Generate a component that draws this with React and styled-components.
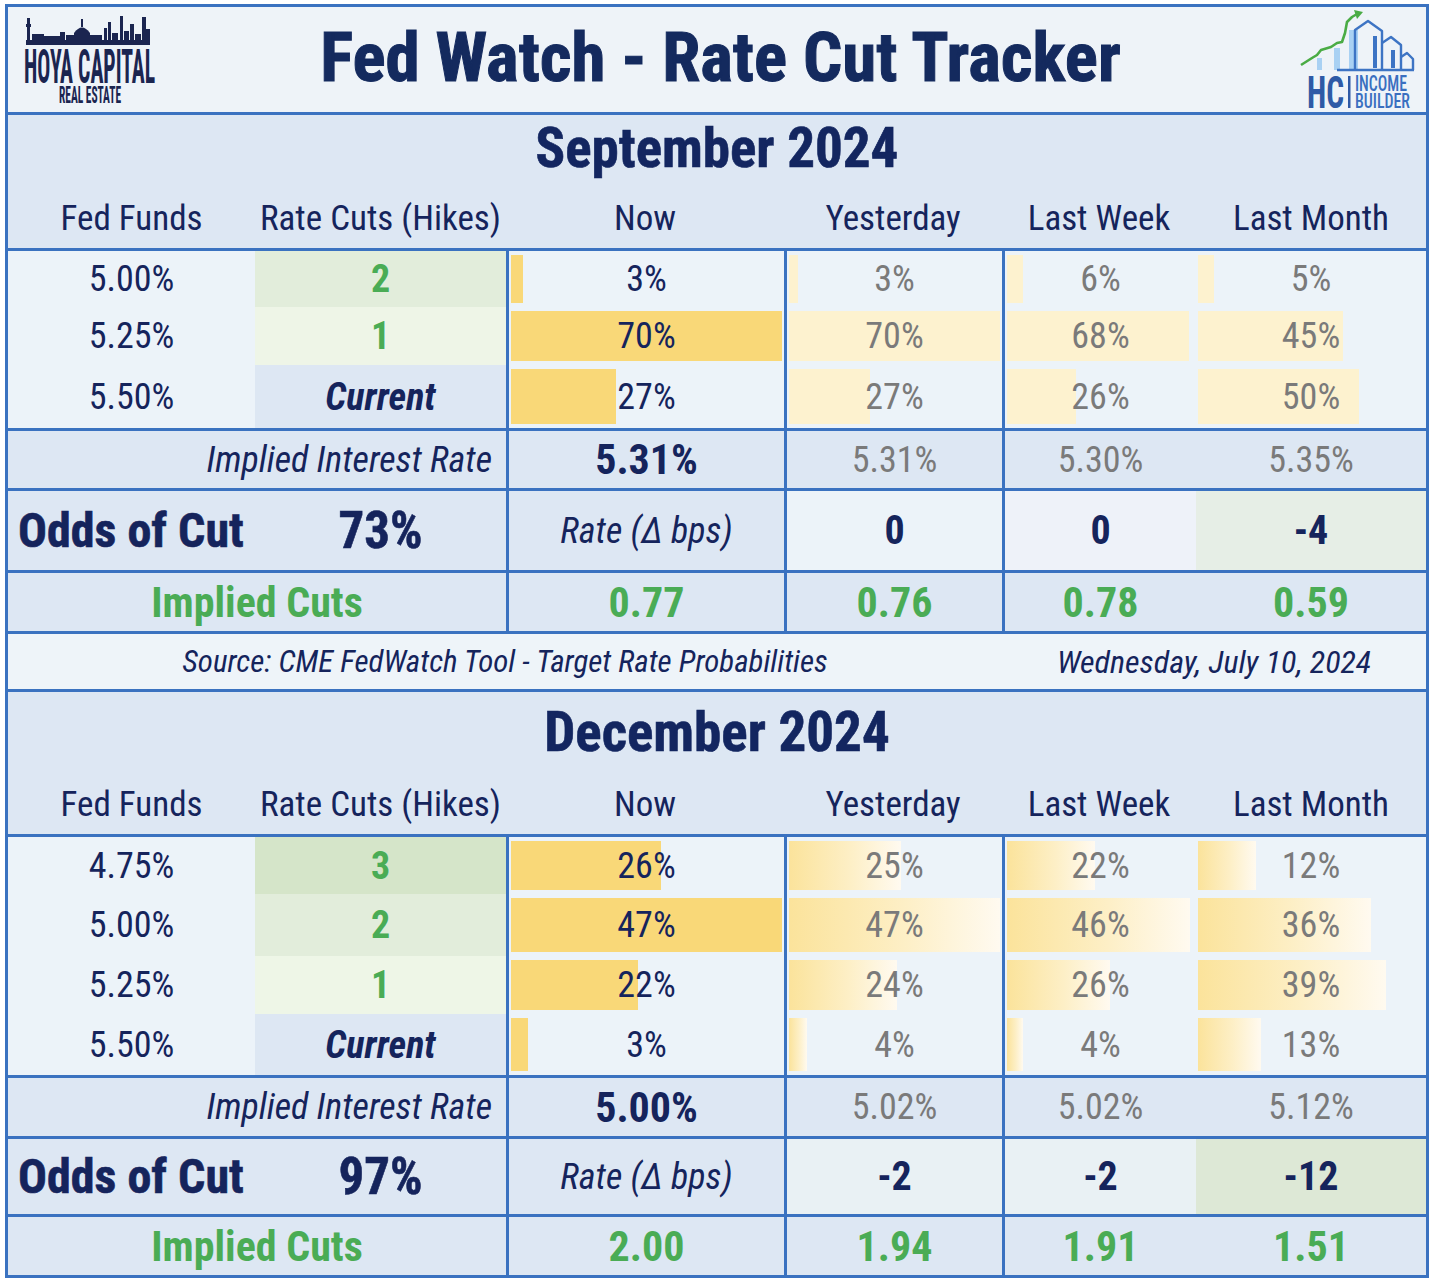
import React from "react";
import styled, { createGlobalStyle } from "styled-components";

const NAVY = "#15245c";
const BLUE = "#3a72c0";
const GREEN = "#4aac55";
const GRAY = "#7a7a7a";
const PALE = "#ecf3f9";
const BAND = "#dde7f3";
const FONT = `"Roboto Condensed", "Noto Sans", sans-serif`;
const COLS = "247px 251px 278px 218px 194px 230px";

const GlobalStyle = createGlobalStyle`
  body {
    margin: 0;
    background: #ffffff;
    font-family: ${FONT};
    font-stretch: condensed;
    color: ${NAVY};
  }
  * { box-sizing: border-box; }
`;

const Page = styled.div`
  padding: 4px 0 6px 5px;
`;

const Frame = styled.div`
  width: 1424px;
  border: 3px solid ${BLUE};
`;

const Header = styled.div`
  display: grid;
  grid-template-columns: 1fr auto 1fr;
  height: 105px;
  background: #eef3f8;
  padding: 0 9px 0 16px;
`;

const LeftLogo = styled.svg`
  justify-self: start;
  margin-top: 7px;
`;

const RightLogo = styled.svg`
  justify-self: end;
  margin-top: 1px;
`;

const Title = styled.h1`
  margin: 0;
  align-self: center;
  font-size: 69px;
  font-weight: 700;
  line-height: 1;
  margin-top: -4px;
  color: #142a5e;
  -webkit-text-stroke: 1px #142a5e;
`;

const Band = styled.div`
  border-top: 3px solid ${BLUE};
  background: ${BAND};
`;

const SectionTitle = styled.div`
  height: ${(p) => p.$h}px;
  display: flex;
  align-items: center;
  justify-content: center;
  font-size: 55px;
  font-weight: 700;
  color: #132660;
  -webkit-text-stroke: 0.6px #132660;
  padding-top: ${(p) => p.$shift}px;
`;

const Row = styled.div`
  display: grid;
  grid-template-columns: ${COLS};
  height: ${(p) => p.$h}px;
  border-top: ${(p) => (p.$plain ? "none" : `3px solid ${BLUE}`)};
`;

const Cell = styled.div`
  grid-column: span ${(p) => p.$span || 1};
  display: flex;
  align-items: center;
  justify-content: center;
  background: ${(p) => p.$bg || BAND};
  border-left: ${(p) => (p.$line ? `3px solid ${BLUE}` : "none")};
  color: ${NAVY};
  font-size: 36px;
  white-space: nowrap;
  min-width: 0;
`;

const HeadCell = styled(Cell)`
  background: transparent;
  font-size: 35px;
  padding-top: 8px;
`;

const RateCell = styled(Cell)`
  background: ${PALE};
`;

const CutCell = styled(Cell)`
  font-weight: 700;
  font-size: 38px;
  color: ${(p) => (p.$current ? NAVY : GREEN)};
  font-style: ${(p) => (p.$current ? "italic" : "normal")};
`;

const BarCell = styled(Cell)`
  display: grid;
  grid-template-columns: minmax(0, 1fr);
  grid-template-rows: minmax(0, 1fr);
  padding: 4px 2px;
  background: ${PALE};
`;

const Bar = styled.div`
  grid-area: 1 / 1;
  justify-self: start;
  height: 100%;
  background: ${(p) => p.$fill};
`;

const BarValue = styled.span`
  grid-area: 1 / 1;
  place-self: center;
  color: ${(p) => (p.$now ? NAVY : GRAY)};
  z-index: 1;
`;

const LabelCell = styled(Cell)`
  justify-content: flex-end;
  padding-right: 14px;
  font-style: italic;
`;

const ImpliedValue = styled(Cell)`
  font-weight: ${(p) => (p.$now ? 700 : 400)};
  font-size: ${(p) => (p.$now ? 42 : 36)}px;
  color: ${(p) => (p.$now ? NAVY : GRAY)};
`;

const OddsLabel = styled(Cell)`
  justify-content: flex-start;
  padding-left: 10px;
  font-size: 48px;
  font-weight: 700;
  -webkit-text-stroke: 0.6px ${NAVY};
`;

const OddsValue = styled(Cell)`
  font-size: 51px;
  font-weight: 700;
  -webkit-text-stroke: 0.6px ${NAVY};
`;

const DeltaLabel = styled(Cell)`
  font-style: italic;
`;

const DeltaValue = styled(Cell)`
  font-size: 40px;
  font-weight: 700;
`;

const CutsCell = styled(Cell)`
  font-size: 42px;
  font-weight: 700;
  color: ${GREEN};
`;

const SourceCell = styled(Cell)`
  background: #eef4f9;
  font-style: italic;
  font-size: ${(p) => p.$size}px;
`;

const sections = [
  {
    title: "September 2024",
    titleH: 66,
    shift: 0,
    max: 70,
    gradient: false,
    rows: [
      { rate: "5.00%", cut: "2", cutBg: "#e2eddb", h: 59, vals: [3, 3, 6, 5] },
      { rate: "5.25%", cut: "1", cutBg: "#eef5e7", h: 58, vals: [70, 70, 68, 45] },
      { rate: "5.50%", cut: "Current", h: 63, vals: [27, 27, 26, 50] },
    ],
    implied: ["5.31%", "5.31%", "5.30%", "5.35%"],
    odds: "73%",
    oddsH: 82,
    deltas: [
      { v: "0", bg: PALE },
      { v: "0", bg: "#eef2f9" },
      { v: "-4", bg: "#e6eee6" },
    ],
    cuts: ["0.77", "0.76", "0.78", "0.59"],
    impliedH: 60,
    cutsH: 61,
  },
  {
    title: "December 2024",
    titleH: 75,
    shift: 4,
    max: 47,
    gradient: true,
    rows: [
      { rate: "4.75%", cut: "3", cutBg: "#d5e5c9", h: 60, vals: [26, 25, 22, 12] },
      { rate: "5.00%", cut: "2", cutBg: "#e2eddb", h: 62, vals: [47, 47, 46, 36] },
      { rate: "5.25%", cut: "1", cutBg: "#eef6e7", h: 58, vals: [22, 24, 26, 39] },
      { rate: "5.50%", cut: "Current", h: 61, vals: [3, 4, 4, 13] },
    ],
    implied: ["5.00%", "5.02%", "5.02%", "5.12%"],
    odds: "97%",
    oddsH: 78,
    deltas: [
      { v: "-2", bg: "#e9f1f4" },
      { v: "-2", bg: "#e9f1f4" },
      { v: "-12", bg: "#dde8d6" },
    ],
    cuts: ["2.00", "1.94", "1.91", "1.51"],
    impliedH: 61,
    cutsH: 61,
  },
];

const HEADS = ["Fed Funds", "Rate Cuts (Hikes)", "Now", "Yesterday", "Last Week", "Last Month"];

const barFill = (now, gradient) => {
  if (now) return "#f9d878";
  if (gradient) return "linear-gradient(90deg, #fbe39b 0%, #fdefc6 55%, #fffaf0 100%)";
  return "#fdf2cf";
};

// tall, squeezed logo lettering: small font stretched vertically
const LogoText = ({ x, y, size, sy, width, weight, fill, children }) => (
  <text
    x={x}
    y={y / sy}
    transform={`scale(1 ${sy})`}
    fontSize={size}
    fontWeight={weight}
    fill={fill}
    fontFamily={FONT}
    textLength={width}
    lengthAdjust="spacingAndGlyphs"
  >
    {children}
  </text>
);

const HoyaLogo = () => (
  <LeftLogo width="135" height="92" viewBox="0 0 135 92">
    <g fill="#1b2550">
      <rect x="2" y="26" width="124" height="5" />
      <rect x="3" y="4" width="3" height="22" />
      <rect x="2" y="10" width="5" height="3" />
      <rect x="8" y="20" width="12" height="6" />
      <rect x="20" y="22" width="16" height="4" />
      <rect x="36" y="18" width="5" height="8" />
      <rect x="42" y="21" width="8" height="5" />
      <path d="M50 26 L50 19 Q58 8 66 19 L66 26 Z" />
      <rect x="57" y="5" width="2" height="8" />
      <rect x="66" y="21" width="12" height="5" />
      <rect x="80" y="14" width="3" height="12" />
      <rect x="84" y="8" width="3" height="18" />
      <rect x="88" y="19" width="6" height="7" />
      <rect x="96" y="2" width="3" height="24" />
      <rect x="100" y="17" width="5" height="9" />
      <rect x="106" y="10" width="4" height="16" />
      <rect x="111" y="20" width="6" height="6" />
      <rect x="118" y="3" width="4" height="23" />
      <rect x="122" y="15" width="4" height="11" />
    </g>
    <LogoText x={0} y={69} size={23} sy={2.1} width={131} weight={700} fill="#1b2550">
      HOYA CAPITAL
    </LogoText>
    <LogoText x={35} y={89} size={12} sy={2} width={62} weight={700} fill="#1b2550">
      REAL ESTATE
    </LogoText>
  </LeftLogo>
);

const IncomeLogo = () => (
  <RightLogo width="120" height="104" viewBox="0 0 120 104">
    <g fill="#a9d1f3">
      <rect x="52" y="22" width="9" height="40" />
      <rect x="37" y="40" width="6" height="22" />
      <rect x="20" y="50" width="5" height="12" />
    </g>
    <g fill="none" stroke="#3d74c4" strokeWidth="2.4" strokeLinejoin="round">
      <path d="M58 62 L58 22 L71 13 L85 23 L85 62" />
      <path d="M85 35 L94 29 L104 37 L104 62" />
      <path d="M104 49 L110 45 L116 51 L116 62" />
      <path d="M40 62 L117 62" />
    </g>
    <g fill="#3d74c4">
      <rect x="76" y="28" width="4" height="32" />
      <rect x="94" y="42" width="4" height="18" />
    </g>
    <polyline
      points="4,57 15,50 20,47 24,42 34,39 40,35 45,34 48,25 50,14 55,9 60,6"
      fill="none"
      stroke="#4aac45"
      strokeWidth="2.6"
      strokeLinejoin="round"
    />
    <path d="M57 2 L66 4 L60 11 Z" fill="#4aac45" />
    <LogoText x={10} y={100} size={33} sy={1.35} width={37} weight={700} fill="#2e5aa6">
      HC
    </LogoText>
    <rect x="51" y="68" width="2.5" height="32" fill="#2e5aa6" />
    <LogoText x={58} y={83} size={17} sy={1.25} width={52} weight={500} fill="#3a6fc0">
      INCOME
    </LogoText>
    <LogoText x={58} y={100} size={16} sy={1.3} width={55} weight={500} fill="#3a6fc0">
      BUILDER
    </LogoText>
  </RightLogo>
);

const Section = ({ data }) => (
  <>
    <Band>
      <SectionTitle $h={data.titleH} $shift={data.shift}>
        {data.title}
      </SectionTitle>
      <Row $plain $h={67}>
        {HEADS.map((h) => (
          <HeadCell key={h}>{h}</HeadCell>
        ))}
      </Row>
    </Band>
    {data.rows.map((r, i) => (
      <Row key={r.rate} $plain={i > 0} $h={r.h}>
        <RateCell>{r.rate}</RateCell>
        <CutCell $bg={r.cutBg} $current={r.cut === "Current"}>
          {r.cut}
        </CutCell>
        {r.vals.map((v, j) => (
          <BarCell key={j} $line={j < 3}>
            <Bar
              $fill={barFill(j === 0, data.gradient)}
              style={{ width: `${(v / data.max) * 100}%` }}
            />
            <BarValue $now={j === 0}>{v}%</BarValue>
          </BarCell>
        ))}
      </Row>
    ))}
    <Row $h={data.impliedH}>
      <LabelCell $span={2}>Implied Interest Rate</LabelCell>
      {data.implied.map((v, j) => (
        <ImpliedValue key={j} $line={j < 3} $now={j === 0}>
          {v}
        </ImpliedValue>
      ))}
    </Row>
    <Row $h={data.oddsH}>
      <OddsLabel>Odds of Cut</OddsLabel>
      <OddsValue>{data.odds}</OddsValue>
      <DeltaLabel $line>Rate (Δ bps)</DeltaLabel>
      {data.deltas.map((d, j) => (
        <DeltaValue key={j} $line={j < 2} $bg={d.bg}>
          {d.v}
        </DeltaValue>
      ))}
    </Row>
    <Row $h={data.cutsH}>
      <CutsCell $span={2}>Implied Cuts</CutsCell>
      {data.cuts.map((v, j) => (
        <CutsCell key={j} $line={j < 3}>
          {v}
        </CutsCell>
      ))}
    </Row>
  </>
);

const App = () => {
  return (
    <Page>
      <GlobalStyle />
      <Frame>
        <Header>
          <HoyaLogo />
          <Title>Fed Watch - Rate Cut Tracker</Title>
          <IncomeLogo />
        </Header>
        <Section data={sections[0]} />
        <Row $h={58}>
          <SourceCell $span={4} $size={31}>
            Source: CME FedWatch Tool - Target Rate Probabilities
          </SourceCell>
          <SourceCell $span={2} $size={32}>
            Wednesday, July 10, 2024
          </SourceCell>
        </Row>
        <Section data={sections[1]} />
      </Frame>
    </Page>
  );
};

export default App;
